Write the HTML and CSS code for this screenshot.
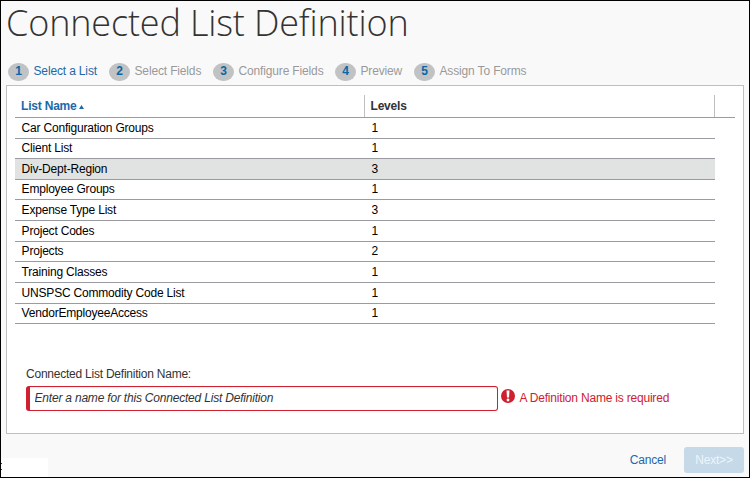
FILE: index.html
```html
<!DOCTYPE html>
<html lang="en">
<head>
<meta charset="utf-8">
<title>Connected List Definition</title>
<link rel="stylesheet" href="styles.css">
</head>
<body>
<main class="window">
  <h1 class="title">Connected List Definition</h1>
  <ol class="steps">
    <li class="step active s1"><span class="num">1</span><span class="step-text">Select a List</span></li>
    <li class="step s2"><span class="num">2</span><span class="step-text">Select Fields</span></li>
    <li class="step s3"><span class="num">3</span><span class="step-text">Configure Fields</span></li>
    <li class="step s4"><span class="num">4</span><span class="step-text">Preview</span></li>
    <li class="step s5"><span class="num">5</span><span class="step-text">Assign To Forms</span></li>
  </ol>
  <section class="panel">
    <div class="head">
      <div class="head-name">List Name<svg class="sort" width="5" height="4" viewBox="0 0 5 4"><path d="M0 4L2.5 0L5 4Z" fill="#1b69a8"/></svg></div>
      <div class="head-levels">Levels</div>
    </div>
    <div class="rows">
      <div class="row"><span>Car Configuration Groups</span><span>1</span></div>
      <div class="row short"><span>Client List</span><span>1</span></div>
      <div class="row selected"><span>Div-Dept-Region</span><span>3</span></div>
      <div class="row short"><span>Employee Groups</span><span>1</span></div>
      <div class="row"><span>Expense Type List</span><span>3</span></div>
      <div class="row"><span>Project Codes</span><span>1</span></div>
      <div class="row short"><span>Projects</span><span>2</span></div>
      <div class="row"><span>Training Classes</span><span>1</span></div>
      <div class="row"><span>UNSPSC Commodity Code List</span><span>1</span></div>
      <div class="row short"><span>VendorEmployeeAccess</span><span>1</span></div>
    </div>
    <div class="form">
      <label class="label" for="name">Connected List Definition Name:</label>
      <div class="field">
        <input class="input" id="name" type="text" placeholder="Enter a name for this Connected List Definition">
        <svg class="alert" width="14" height="14" viewBox="0 0 14 14"><circle cx="7" cy="7" r="7" fill="#cf202f"/><path d="M5.5 1.5H8.5L8 8.6H6Z" fill="#fff"/><circle cx="7" cy="11" r="1.4" fill="#fff"/></svg>
        <span class="error">A Definition Name is required</span>
      </div>
    </div>
  </section>
  <footer class="footer">
    <div class="corner"><i></i><i></i></div>
    <a class="cancel">Cancel</a>
    <button class="next" disabled>Next&gt;&gt;</button>
  </footer>
</main>
</body>
</html>
```
FILE: styles.css
```css
* { box-sizing: border-box; }
body { margin: 0; font: 12px/14px "Liberation Sans", Arial, sans-serif; letter-spacing: -0.2px; color: #000; }
.window { display: flex; flex-direction: column; width: 750px; height: 478px; border: 1px solid #000; background: #f9f9f9; }
.title { margin: 0; height: 62px; padding-left: 5px; font: 300 36px/44px "Open Sans", sans-serif; letter-spacing: -0.15px; color: #333; white-space: nowrap; }
.steps { display: flex; height: 22px; margin: 0; padding: 0 0 0 7px; list-style: none; }
.step { display: flex; height: 18px; color: #999; white-space: nowrap; }
.step-text { line-height: 16px; letter-spacing: -0.15px; }
.step.active { color: #1b69a8; }
.s1 { width: 101px; }
.s2 { width: 104px; }
.s3 { width: 122px; }
.s4 { width: 79px; }
.num { width: 21px; height: 18px; margin-right: 4.5px; border-radius: 10px / 9px; background: #c0c2c3; color: #0a66a6; font-weight: bold; line-height: 17px; text-align: center; }
.panel { width: 738px; height: 349px; margin-left: 5px; border: 1px solid #bdbfc1; background: #fff; padding: 9px 8px 0; }
.head { display: flex; width: 720px; height: 23px; border-bottom: 1px solid #999ba0; font-weight: bold; line-height: 22px; }
.head-name { width: 349px; padding-left: 6px; color: #1b69a8; }
.sort { margin-left: 2px; vertical-align: 1px; }
.head-levels { width: 351px; padding-left: 5.5px; border: solid #bdbfc1; border-width: 0 1px; color: #333; }
.rows { display: grid; grid-template-rows: 21px 20px 21px 20px 21px 21px 20px 21px 21px 20px; width: 700px; }
.row { display: grid; grid-template-columns: 350px 350px; border-bottom: 1px solid #999ba0; line-height: 20px; }
.row span { padding-left: 6.6px; }
.short { line-height: 18px; }
.selected { background: #e1e3e2; }
.form { padding: 43px 0 0 11px; }
.label { display: block; height: 19px; color: #333; line-height: 14px; letter-spacing: -0.23px; }
.field { display: flex; }
.input { width: 472px; height: 25px; padding: 0 4.5px 2px; border: 1px solid #cf202f; border-left-width: 4px; border-radius: 3px; background: #fff; box-shadow: inset 0 1px 1px #eee; font: italic 12px "Liberation Sans", Arial, sans-serif; letter-spacing: -0.2px; outline: 0; }
.input::placeholder { color: #333; opacity: 1; }
.alert { margin: 3px 4.5px 0 3px; }
.error { color: #cf202f; line-height: 24px; }
.footer { display: flex; flex: 1; align-items: flex-start; padding: 13px 5px 0 0; }
.corner { width: 47px; height: 19px; margin-top: 11px; background: #fff; }
.corner i { display: block; width: 1px; height: 1px; margin-top: 5px; background: #333; }
.cancel { margin-left: auto; margin-right: 18px; color: #1b69a8; line-height: 26px; }
.next { width: 60px; height: 26px; padding: 0; border: 0; border-radius: 3px; background: #c5d9e8; color: #eef5fa; font: 12px "Liberation Sans", Arial, sans-serif; letter-spacing: -0.2px; }
```
